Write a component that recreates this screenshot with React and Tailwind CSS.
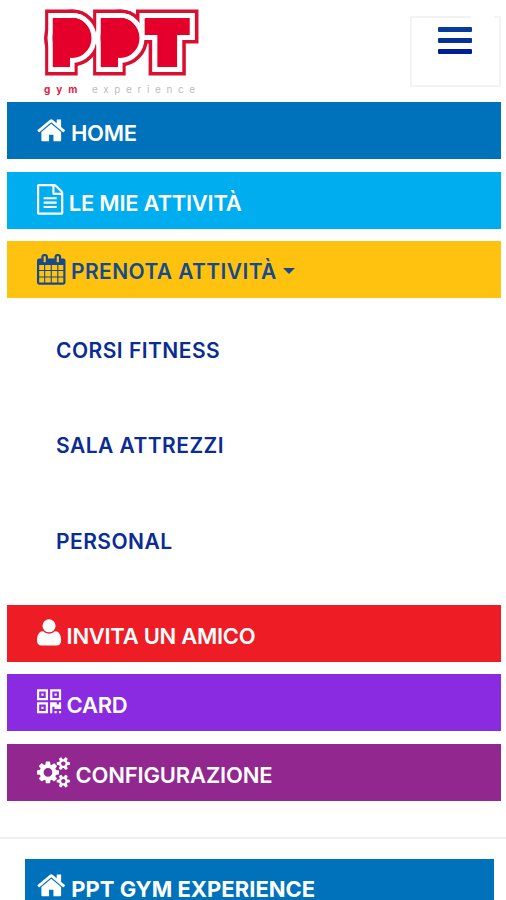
import React from 'react';
import clsx from 'clsx';

const icons = {
  home: {
    viewBox: '64 0 1664 1792',
    size: 'w-[28.5px]',
    d: 'M1472 992v480q0 26-19 45t-45 19h-384v-384h-256v384h-384q-26 0-45-19t-19-45v-480q0-1 .5-3t.5-3l575-474 575 474q1 2 1 6zm223-69l-62 74q-8 9-21 11h-3q-13 0-21-7l-692-577-692 577q-12 8-24 7-13-2-21-11l-62-74q-8-10-7-23.5t11-21.5l719-599q32-26 76-26t76 26l244 204v-195q0-14 9-23t23-9h192q14 0 23 9t9 23v408l219 182q10 8 11 21.5t-7 23.5z',
  },
  file: {
    viewBox: '128 0 1536 1792',
    size: 'w-[26.3px]',
    d: 'M1596 380q28 28 48 76t20 88v1152q0 40-28 68t-68 28h-1344q-40 0-68-28t-28-68v-1600q0-40 28-68t68-28h896q40 0 88 20t76 48zm-444-244v376h376q-10-29-22-41l-313-313q-12-12-41-22zm384 1528v-1024h-416q-40 0-68-28t-28-68v-416h-768v1536h1280zm-1024-864q0-14 9-23t23-9h704q14 0 23 9t9 23v64q0 14-9 23t-23 9h-704q-14 0-23-9t-9-23v-64zm736 224q14 0 23 9t9 23v64q0 14-9 23t-23 9h-704q-14 0-23-9t-9-23v-64q0-14 9-23t23-9h704zm0 256q14 0 23 9t9 23v64q0 14-9 23t-23 9h-704q-14 0-23-9t-9-23v-64q0-14 9-23t23-9h704z',
  },
  calendar: {
    viewBox: '64 0 1664 1792',
    size: 'w-[28.5px]',
    d: 'M192 1664h288v-288h-288v288zm352 0h320v-288h-320v288zm-352-352h288v-320h-288v320zm352 0h320v-320h-320v320zm-352-384h288v-288h-288v288zm736 736h320v-288h-320v288zm-384-736h320v-288h-320v288zm768 736h288v-288h-288v288zm-384-352h320v-320h-320v320zm-352-864v-288q0-13-9.5-22.5t-22.5-9.5h-64q-13 0-22.5 9.5t-9.5 22.5v288q0 13 9.5 22.5t22.5 9.5h64q13 0 22.5-9.5t9.5-22.5zm736 864h288v-320h-288v320zm-384-384h320v-288h-320v288zm384 0h288v-288h-288v288zm32-480v-288q0-13-9.5-22.5t-22.5-9.5h-64q-13 0-22.5 9.5t-9.5 22.5v288q0 13 9.5 22.5t22.5 9.5h64q13 0 22.5-9.5t9.5-22.5zm384-64v1280q0 52-38 90t-90 38h-1408q-52 0-90-38t-38-90v-1280q0-52 38-90t90-38h128v-96q0-66 47-113t113-47h64q66 0 113 47t47 113v96h384v-96q0-66 47-113t113-47h64q66 0 113 47t47 113v96h128q52 0 90 38t38 90z',
  },
  user: {
    viewBox: '192 0 1408 1792',
    size: 'w-[24.1px]',
    d: 'M1600 1405q0 120-73 189.5t-194 69.5h-874q-121 0-194-69.5t-73-189.5q0-53 3.5-103.5t14-109 26.5-108.5 43-97.5 62-81 85.5-53.5 111.5-20q9 0 42 21.5t74.5 48 108 48 133.5 21.5 133.5-21.5 108-48 74.5-48 42-21.5q61 0 111.5 20t85.5 53.5 62 81 43 97.5 26.5 108.5 14 109 3.5 103.5zm-320-893q0 159-112.5 271.5t-271.5 112.5-271.5-112.5-112.5-271.5 112.5-271.5 271.5-112.5 271.5 112.5 112.5 271.5z',
  },
  qrcode: {
    viewBox: '192 0 1408 1792',
    size: 'w-[24.1px]',
    d: 'M576 1152v128h-128v-128h128zm0-768v128h-128v-128h128zm768 0v128h-128v-128h128zm-1024 1023h384v-383h-384v383zm0-767h384v-384h-384v384zm768 0h384v-384h-384v384zm-256 256v640h-640v-640h640zm512 512v128h-128v-128h128zm256 0v128h-128v-128h128zm0-512v384h-384v-128h-128v384h-128v-640h384v128h128v-128h128zm-768-768v640h-640v-640h640zm768 0v640h-640v-640h640z',
  },
  cogs: {
    viewBox: '-64 0 1920 1792',
    size: 'w-[32.9px]',
    d: 'M832 896q0-106-75-181t-181-75-181 75-75 181 75 181 181 75 181-75 75-181zm768 512q0-52-38-90t-90-38-90 38-38 90q0 53 37.5 90.5t90.5 37.5 90.5-37.5 37.5-90.5zm0-1024q0-52-38-90t-90-38-90 38-38 90q0 53 37.5 90.5t90.5 37.5 90.5-37.5 37.5-90.5zm-384 421v185q0 10-7 19.5t-16 10.5l-155 24q-11 35-32 76 34 48 90 115 7 11 7 20 0 12-7 19-23 30-82.5 89.5t-78.5 59.5q-11 0-21-7l-115-90q-37 19-77 31-11 108-23 155-7 24-30 24h-186q-11 0-20-7.5t-10-17.5l-23-153q-34-10-75-31l-118 89q-7 7-20 7-11 0-21-8-144-133-144-160 0-9 7-19 10-14 41-53t47-61q-23-44-35-82l-152-24q-10-1-17-9.5t-7-19.5v-185q0-10 7-19.5t16-10.5l155-24q11-35 32-76-34-48-90-115-7-11-7-20 0-12 7-20 22-30 82-89t79-59q11 0 21 7l115 90q34-18 77-32 11-108 23-154 7-24 30-24h186q11 0 20 7.5t10 17.5l23 153q34 10 75 31l118-89q8-7 20-7 11 0 21 8 144 133 144 160 0 8-7 19-12 16-42 54t-45 60q23 48 34 82l152 23q10 2 17 10.5t7 19.5zm640 533v140q0 16-149 31-12 27-30 52 51 113 51 138 0 4-4 7-122 71-124 71-8 0-46-47t-52-68q-20 2-30 2t-30-2q-14 21-52 68t-46 47q-2 0-124-71-4-3-4-7 0-25 51-138-18-25-30-52-149-15-149-31v-140q0-16 149-31 13-29 30-52-51-113-51-138 0-4 4-7 4-2 35-20t59-34 30-16q8 0 46 46.5t52 67.5q20-2 30-2t30 2q51-71 92-112l6-2q4 0 124 70 4 3 4 7 0 25-51 138 17 23 30 52 149 15 149 31zm0-1024v140q0 16-149 31-12 27-30 52 51 113 51 138 0 4-4 7-122 71-124 71-8 0-46-47t-52-68q-20 2-30 2t-30-2q-14 21-52 68t-46 47q-2 0-124-71-4-3-4-7 0-25 51-138-18-25-30-52-149-15-149-31v-140q0-16 149-31 13-29 30-52-51-113-51-138 0-4 4-7 4-2 35-20t59-34 30-16q8 0 46 46.5t52 67.5q20-2 30-2t30 2q51-71 92-112l6-2q4 0 124 70 4 3 4 7 0 25-51 138 17 23 30 52 149 15 149 31z',
  },
};

const topItems = [
  {
    label: 'HOME',
    icon: 'home',
    color: 'bg-[#0072bc] text-white pt-[12.4px]',
    text: 'text-[22px] tracking-[-0.3px]',
  },
  {
    label: 'LE MIE ATTIVITÀ',
    icon: 'file',
    color: 'bg-[#00aeef] text-white pt-[12.6px]',
    text: 'text-[22px] tracking-[-0.25px]',
  },
  {
    label: 'PRENOTA ATTIVITÀ',
    icon: 'calendar',
    color: 'bg-[#ffc20e] text-[#174a8c] pt-[12.3px]',
    text: 'text-[21px] tracking-[0.4px]',
    caret: true,
  },
];

const subItems = ['CORSI FITNESS', 'SALA ATTREZZI', 'PERSONAL'];

const bottomItems = [
  {
    label: 'INVITA UN AMICO',
    icon: 'user',
    color: 'bg-[#ee1c25] text-white pt-[12px]',
    text: 'text-[22px] tracking-[-0.28px] mt-[0.6px]',
  },
  {
    label: 'CARD',
    icon: 'qrcode',
    color: 'bg-[#8a2be2] text-white pt-[12.3px]',
    text: 'text-[22px] tracking-[-0.3px]',
  },
  {
    label: 'CONFIGURAZIONE',
    icon: 'cogs',
    color: 'bg-[#92278f] text-white pt-[13px]',
    text: 'text-[22px] tracking-[-0.15px]',
  },
];

const Icon = ({ name }) => (
  <svg
    viewBox={icons[name].viewBox}
    className={clsx('h-[30.7px] shrink-0 overflow-visible', icons[name].size)}
    fill="currentColor"
  >
    <path d={icons[name].d} />
  </svg>
);

const MenuItem = ({ item }) => (
  <a className={clsx('flex h-[57px] items-start pl-[30px]', item.color)}>
    <Icon name={item.icon} />
    <span className={clsx('ml-[5.5px] pt-[4.5px] leading-[28px] font-semibold whitespace-nowrap', item.text)}>
      {item.label}
    </span>
    {item.caret && (
      <svg viewBox="0 0 12 6" className="mt-[14px] ml-[6px] h-[6px] w-[12px]" fill="currentColor">
        <path d="M0 0h12L6 6z" />
      </svg>
    )}
  </a>
);

// Each pass is drawn under the next: outline, white ring, fill
const logoPasses = [
  { color: '#d80f32', width: 25 },
  { color: '#ffffff', width: 18 },
  { color: '#e4002b', width: 8 },
];

const logoLetters = [
  { char: 'P', transform: 'translate(54 63) scale(0.9 1)' },
  { char: 'P', transform: 'translate(102 63) scale(0.9 1)' },
  { char: 'T', transform: 'translate(147.3 63) scale(1.03 1)' },
];

const Logo = () => (
  <svg viewBox="0 0 210 102" className="h-[102px] w-[210px]">
    {logoPasses.map((pass) => (
      <g
        key={pass.color}
        fill={pass.color}
        stroke={pass.color}
        strokeWidth={pass.width}
        strokeMiterlimit="2"
        className="font-[Inter,sans-serif] text-[56.5px] font-black"
      >
        {/* solid discs behind the two P bowls */}
        <ellipse cx="72" cy="38" rx="15.5" ry="16" />
        <ellipse cx="120" cy="38" rx="15.5" ry="16" />
        {logoLetters.map((letter) => (
          <text key={letter.transform} transform={letter.transform}>
            {letter.char}
          </text>
        ))}
      </g>
    ))}
    <text x="44" y="93" fill="#dc2348" className="font-[Inter,sans-serif] text-[10px] font-bold tracking-[6px]">
      gym
    </text>
    <text x="92" y="93" fill="#bdbdbd" className="font-[Inter,sans-serif] text-[10px] tracking-[5.6px]">
      experience
    </text>
  </svg>
);

const App = () => {
  return (
    <div className="h-[900px] w-[506px] overflow-hidden bg-white font-[Inter,'Liberation_Sans',sans-serif]">
      {/* Header */}
      <header className="flex h-[102.3px] items-start justify-between pr-[5px]">
        <Logo />
        <button
          type="button"
          className="relative mt-4 flex h-[71px] w-[91px] flex-col items-center gap-[6px] border-2 border-[#f3f3f3] pt-[9px] pr-[2px]"
        >
          <span className="absolute -top-[2px] right-[5px] h-[2px] w-[23px] bg-white" />
          <span className="h-[5px] w-[34px] rounded-[1px] bg-[#073b9b]" />
          <span className="h-[5px] w-[34px] rounded-[1px] bg-[#06319a]" />
          <span className="h-[5px] w-[34px] rounded-[1px] bg-[#001c96]" />
        </button>
      </header>

      {/* Main menu */}
      <nav className="flex flex-col gap-[12.5px] pr-[5.5px] pl-[7px]">
        {topItems.map((item) => (
          <MenuItem key={item.label} item={item} />
        ))}
        <ul className="flex h-[281.7px] flex-col gap-[67.4px] pt-[26px] pl-[49px] text-[21px] leading-[28px] font-semibold tracking-[0.47px] text-[#0b2c94]">
          {subItems.map((label) => (
            <li key={label}>{label}</li>
          ))}
        </ul>
        {bottomItems.map((item) => (
          <MenuItem key={item.label} item={item} />
        ))}
      </nav>

      {/* Footer */}
      <footer className="mt-[36px] border-t-2 border-[#efefef] pt-[20px] pr-[12px] pl-[25px]">
        <a className="flex h-[57px] items-start bg-[#0072bc] pt-[11px] pl-[12px] text-white">
          <Icon name="home" />
          <span className="ml-[5.7px] pt-[5px] text-[22px] leading-[28px] font-bold tracking-[0.02px] whitespace-nowrap">
            PPT GYM EXPERIENCE
          </span>
        </a>
      </footer>
    </div>
  );
};

export default App;
